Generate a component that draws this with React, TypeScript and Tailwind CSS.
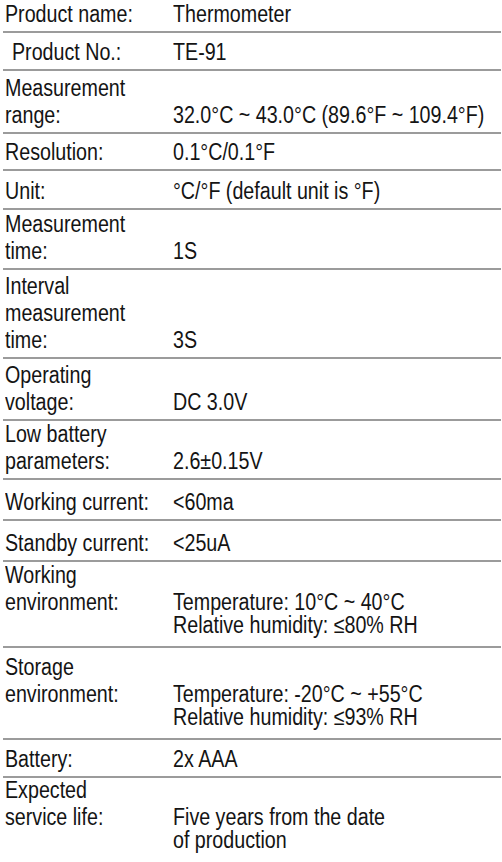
import React from "react";

type Row = {
  label: string[];
  value: string[];
  h: string;
  lp?: string;
  vp?: string;
  indent?: boolean;
  last?: boolean;
};

const rows: Row[] = [
  { label: ["Product name:"], value: ["Thermometer"], h: "h-[33px]" },
  { label: ["Product No.:"], value: ["TE-91"], h: "h-[38px]", indent: true },
  { label: ["Measurement", "range:"], value: ["32.0°C ~ 43.0°C (89.6°F ~ 109.4°F)"], h: "h-[63px]" },
  { label: ["Resolution:"], value: ["0.1°C/0.1°F"], h: "h-[37px]" },
  { label: ["Unit:"], value: ["°C/°F (default unit is °F)"], h: "h-[39px]" },
  { label: ["Measurement", "time:"], value: ["1S"], h: "h-[60px]" },
  { label: ["Interval", "measurement", "time:"], value: ["3S"], h: "h-[89px]" },
  { label: ["Operating", "voltage:"], value: ["DC 3.0V"], h: "h-[62px]" },
  { label: ["Low battery", "parameters:"], value: ["2.6±0.15V"], h: "h-[59px]" },
  { label: ["Working current:"], value: ["<60ma"], h: "h-[41px]" },
  { label: ["Standby current:"], value: ["<25uA"], h: "h-[41px]" },
  {
    label: ["Working", "environment:"],
    value: ["Temperature: 10°C ~ 40°C", "Relative humidity: ≤80% RH"],
    h: "h-[86px]",
    lp: "pb-[30px]",
    vp: "pb-[9px]",
  },
  {
    label: ["Storage", "environment:"],
    value: ["Temperature: -20°C ~ +55°C", "Relative humidity: ≤93% RH"],
    h: "h-[92px]",
    lp: "pb-[30px]",
    vp: "pb-[9px]",
  },
  { label: ["Battery:"], value: ["2x AAA"], h: "h-[38px]" },
  {
    label: ["Expected", "service life:"],
    value: ["Five years from the date", "of production"],
    h: "h-[84px]",
    lp: "pb-[31px]",
    vp: "pb-[10px]",
    last: true,
  },
];

function Line({ text }: { text: string }) {
  return (
    <div className="whitespace-nowrap origin-left scale-x-[0.855]">{text}</div>
  );
}

export default function App() {
  return (
    <div className="w-[502px] h-[862px] bg-white text-[#141414] overflow-hidden font-['Liberation_Sans',Arial,sans-serif]">
      <div className="ml-[3px] mr-[1px] flex flex-col">
        {rows.map((r, i) => {
          const multi = r.value.length > 1;
          return (
            <div
              key={i}
              className={[
                "flex items-end box-border",
                r.h,
                r.last ? "" : "border-b-2 border-[#9b9b9b]",
              ].join(" ")}
            >
              <div
                className={[
                  "w-[170px] shrink-0 text-[23px] leading-[27px]",
                  r.indent ? "pl-[9px]" : "pl-[2px]",
                  r.lp ?? "pb-[3px]",
                ].join(" ")}
              >
                {r.label.map((t, j) => (
                  <Line key={j} text={t} />
                ))}
              </div>
              <div
                className={[
                  "flex-1 text-[23px]",
                  multi ? "leading-[23px]" : "leading-[27px]",
                  r.vp ?? "pb-[3px]",
                ].join(" ")}
              >
                {r.value.map((t, j) => (
                  <Line key={j} text={t} />
                ))}
              </div>
            </div>
          );
        })}
      </div>
    </div>
  );
}
